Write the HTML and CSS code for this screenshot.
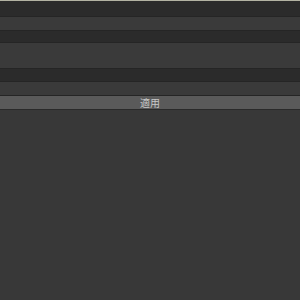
FILE: index.html
```html
<!DOCTYPE html>
<html lang="ja">
<head>
    <meta charset="UTF-8">
    <meta name="viewport" content="width=device-width, initial-scale=1.0">
    <title>適用</title>
    <link rel="stylesheet" href="styles.css">
</head>
<body>
    <div class="panel">
        <div class="row dark r1"></div>
        <div class="row light r2"></div>
        <div class="row dark r3"></div>
        <div class="row light r4"></div>
        <div class="row dark r5"></div>
        <div class="row light r6"></div>
        <button class="apply">適用</button>
    </div>
</body>
</html>
```

FILE: styles.css
```css
html, body {
    margin: 0;
    padding: 0;
}
body {
    background: #383838;
    font-family: "Noto Sans CJK JP", "Noto Sans", sans-serif;
    width: 300px;
    height: 300px;
    overflow: hidden;
}
.panel {
    display: flex;
    flex-direction: column;
    border-top: 1px solid #b3b3a3;
}
.row {
    border-bottom: 1px solid #252525;
}
.dark {
    background: #2b2b2b;
}
.light {
    background: #3a3a3a;
}
.r1 { height: 15px; }
.r2 { height: 13px; }
.r3 { height: 11px; }
.r4 { height: 25px; }
.r5 { height: 12px; }
.r6 { height: 13px; }
.apply {
    height: 14px;
    margin: 0;
    padding: 0;
    border: none;
    border-bottom: 1px solid #2a2a2a;
    background: #5a5a5a;
    color: #c8c8c8;
    font-family: "Noto Sans CJK JP", sans-serif;
    font-size: 10px;
    line-height: 14px;
    text-align: center;
}
```
